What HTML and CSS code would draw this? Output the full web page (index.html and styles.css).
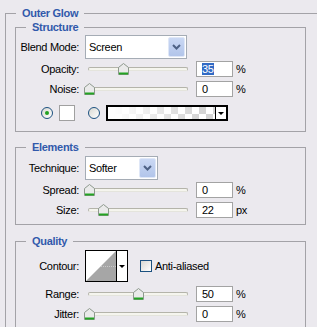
FILE: index.html
```html
<!DOCTYPE html>
<html lang="en">
  <head>
    <meta charset="UTF-8" />
    <meta name="viewport" content="width=device-width, initial-scale=1.0" />
    <title>Outer Glow</title>
    <link rel="stylesheet" href="styles.css">
  </head>
  <body>
    <fieldset class="group outer">
      <legend>Outer Glow</legend>

      <fieldset class="group structure">
        <legend>Structure</legend>
        <div class="row select-row">
          <span class="label">Blend Mode:</span>
          <div class="combo blend-combo">
            <span class="combo-text">Screen</span>
            <span class="combo-button">
              <svg class="chevron" viewBox="0 0 9 6"><path d="M1 1l3.5 3.5L8 1" /></svg>
            </span>
          </div>
        </div>
        <div class="row">
          <span class="label">Opacity:</span>
          <div class="slider">
            <div class="track"></div>
            <svg class="thumb" viewBox="0 0 11 12" style="left: 34px"><path class="thumb-body" d="M5.5 0.5L10.5 4.5V11.5H0.5V4.5Z" /><path class="thumb-base" d="M1 9.5h9v2H1z" /></svg>
          </div>
          <div class="field"><span class="selected">35</span></div>
          <span class="unit">%</span>
        </div>
        <div class="row">
          <span class="label">Noise:</span>
          <div class="slider">
            <div class="track"></div>
            <svg class="thumb" viewBox="0 0 11 12" style="left: 0px"><path class="thumb-body" d="M5.5 0.5L10.5 4.5V11.5H0.5V4.5Z" /><path class="thumb-base" d="M1 9.5h9v2H1z" /></svg>
          </div>
          <div class="field">0</div>
          <span class="unit">%</span>
        </div>
        <div class="swatch-row">
          <span class="radio checked"></span>
          <span class="swatch"></span>
          <span class="radio second"></span>
          <div class="gradient-box">
            <div class="gradient-fill"></div>
            <div class="gradient-arrow"><span class="arrow-down"></span></div>
          </div>
        </div>
      </fieldset>

      <fieldset class="group elements">
        <legend>Elements</legend>
        <div class="row select-row">
          <span class="label">Technique:</span>
          <div class="combo technique-combo">
            <span class="combo-text">Softer</span>
            <span class="combo-button">
              <svg class="chevron" viewBox="0 0 9 6"><path d="M1 1l3.5 3.5L8 1" /></svg>
            </span>
          </div>
        </div>
        <div class="row">
          <span class="label">Spread:</span>
          <div class="slider">
            <div class="track"></div>
            <svg class="thumb" viewBox="0 0 11 12" style="left: 0px"><path class="thumb-body" d="M5.5 0.5L10.5 4.5V11.5H0.5V4.5Z" /><path class="thumb-base" d="M1 9.5h9v2H1z" /></svg>
          </div>
          <div class="field">0</div>
          <span class="unit">%</span>
        </div>
        <div class="row">
          <span class="label">Size:</span>
          <div class="slider">
            <div class="track"></div>
            <svg class="thumb" viewBox="0 0 11 12" style="left: 14px"><path class="thumb-body" d="M5.5 0.5L10.5 4.5V11.5H0.5V4.5Z" /><path class="thumb-base" d="M1 9.5h9v2H1z" /></svg>
          </div>
          <div class="field">22</div>
          <span class="unit">px</span>
        </div>
      </fieldset>

      <fieldset class="group quality">
        <legend>Quality</legend>
        <div class="row contour-row">
          <span class="label">Contour:</span>
          <div class="contour">
            <svg class="contour-curve" viewBox="0 0 30 30"><path d="M0 30L30 0V30Z" fill="#a6a6a6" /><path d="M15 15.5H30" stroke="#c9c9c9" stroke-dasharray="1 1" /></svg>
            <div class="contour-arrow"><span class="arrow-down"></span></div>
          </div>
          <span class="checkbox"></span>
          <span class="check-label">Anti-aliased</span>
        </div>
        <div class="row">
          <span class="label">Range:</span>
          <div class="slider">
            <div class="track"></div>
            <svg class="thumb" viewBox="0 0 11 12" style="left: 49px"><path class="thumb-body" d="M5.5 0.5L10.5 4.5V11.5H0.5V4.5Z" /><path class="thumb-base" d="M1 9.5h9v2H1z" /></svg>
          </div>
          <div class="field">50</div>
          <span class="unit">%</span>
        </div>
        <div class="row">
          <span class="label">Jitter:</span>
          <div class="slider">
            <div class="track"></div>
            <svg class="thumb" viewBox="0 0 11 12" style="left: 0px"><path class="thumb-body" d="M5.5 0.5L10.5 4.5V11.5H0.5V4.5Z" /><path class="thumb-base" d="M1 9.5h9v2H1z" /></svg>
          </div>
          <div class="field">0</div>
          <span class="unit">%</span>
        </div>
      </fieldset>
    </fieldset>
  </body>
</html>
```

FILE: styles.css
```css
body {
  margin: 0;
  padding: 6px 0 0 5px;
  background: #ebe9ee;
  font-family: "Liberation Sans", Arial, sans-serif;
  font-size: 11px;
  letter-spacing: -0.3px;
  color: #000;
  overflow: hidden;
}

.group {
  margin: 0;
  padding: 0;
  border: 1px solid #a3a2a7;
  min-inline-size: 0;
  box-sizing: border-box;
}

.group legend {
  padding: 0 6px;
  margin-left: 10px;
  line-height: 14px;
  font-weight: bold;
  color: #3159ab;
}

/* the dialog is cropped on the right, so the outer box has no right edge */
.outer {
  width: 312px;
  padding-left: 9px;
  border-right: 0;
}

.outer > legend {
  margin-left: 1px;
}

.structure,
.elements,
.quality {
  width: 291px;
}

.structure {
  padding-bottom: 10px;
}

.elements {
  margin-top: 8px;
  padding-bottom: 6px;
}

.quality {
  margin-top: 9px;
  padding-bottom: 10px;
}

.row {
  display: flex;
  align-items: center;
  height: 16px;
  margin-top: 4px;
}

.label {
  width: 63px;
  flex: none;
  text-align: right;
}

.select-row {
  height: 24px;
  margin-top: 1px;
}

.elements .select-row {
  margin-top: 2px;
}

.select-row + .row {
  margin-top: 2px;
}

.combo {
  display: flex;
  height: 24px;
  margin-left: 6px;
  border: 1px solid #a5acb5;
  background: #fff;
  box-sizing: border-box;
}

.blend-combo {
  width: 102px;
}

.technique-combo {
  width: 73px;
}

.combo-text {
  flex: 1;
  padding-left: 3px;
  line-height: 22px;
}

.combo-button {
  width: 15px;
  margin: 1px;
  border: 1px solid #dfe7f7;
  border-radius: 2px;
  background: linear-gradient(#cad8f4, #b2c5ea);
  display: flex;
  justify-content: center;
  align-items: center;
}

.chevron {
  width: 9px;
  height: 6px;
  fill: none;
  stroke: #4d6185;
  stroke-width: 2;
}

.slider {
  position: relative;
  display: flex;
  align-items: center;
  width: 104px;
  height: 16px;
  margin-left: 5px;
  flex: none;
}

.track {
  flex: 1;
  height: 4px;
  margin-left: 4px;
  border: 1px solid #b4b4aa;
  border-bottom-color: #e4e4dc;
  border-radius: 2px;
  background: #f5f5ee;
  box-sizing: border-box;
}

.thumb {
  position: absolute;
  top: 2px;
  width: 11px;
  height: 12px;
}

.thumb-body {
  fill: #eaeaea;
  stroke: #8d988d;
}

.thumb-base {
  fill: #23a323;
}

.field {
  width: 37px;
  height: 16px;
  margin-left: 8px;
  padding-left: 5px;
  border: 1px solid #a3a3a3;
  background: #fff;
  line-height: 14px;
  box-sizing: border-box;
}

.selected {
  background: #316ac5;
  color: #fff;
}

.unit {
  margin-left: 3px;
}

.swatch-row {
  display: flex;
  align-items: center;
  height: 16px;
  margin-top: 8px;
  padding-left: 25px;
}

.radio {
  width: 12px;
  height: 12px;
  border: 1px solid #1c5180;
  border-radius: 50%;
  background: linear-gradient(135deg, #d8d8d2, #fff);
  box-sizing: border-box;
  display: flex;
  justify-content: center;
  align-items: center;
}

.radio.checked::after {
  content: "";
  width: 4px;
  height: 4px;
  border-radius: 50%;
  background: #21a121;
}

.radio.second {
  margin-left: 13px;
}

.swatch {
  width: 16px;
  height: 16px;
  margin-left: 6px;
  border: 1px solid #a0a0a0;
  background: #fff;
  box-sizing: border-box;
}

.gradient-box {
  display: flex;
  width: 122px;
  height: 16px;
  margin-left: 6px;
  border: 2px solid #000;
  box-sizing: border-box;
}

.gradient-fill {
  flex: 1;
  background: linear-gradient(to right, #fff 5%, rgba(255, 255, 255, 0) 85%),
    conic-gradient(#d4d4d4 25%, #fff 0 50%, #d4d4d4 0 75%, #fff 0) 0 0 / 14px 14px;
}

.gradient-arrow,
.contour-arrow {
  width: 10px;
  border-left: 1px solid #000;
  background: #fff;
  display: flex;
  justify-content: center;
  align-items: center;
}

.arrow-down {
  width: 0;
  height: 0;
  border-left: 3px solid transparent;
  border-right: 3px solid transparent;
  border-top: 3px solid #000;
}

.contour-row {
  height: 32px;
  margin-top: 2px;
}

.contour {
  display: flex;
  width: 43px;
  height: 32px;
  margin-left: 6px;
  border: 1px solid #000;
  background: #fff;
  box-sizing: border-box;
}

.contour-curve {
  width: 30px;
  height: 30px;
}

.checkbox {
  width: 12px;
  height: 12px;
  margin-left: 12px;
  border: 1px solid #1c5180;
  background: linear-gradient(135deg, #d8d8d2, #fff);
  box-sizing: border-box;
}

.check-label {
  margin-left: 3px;
}
```
